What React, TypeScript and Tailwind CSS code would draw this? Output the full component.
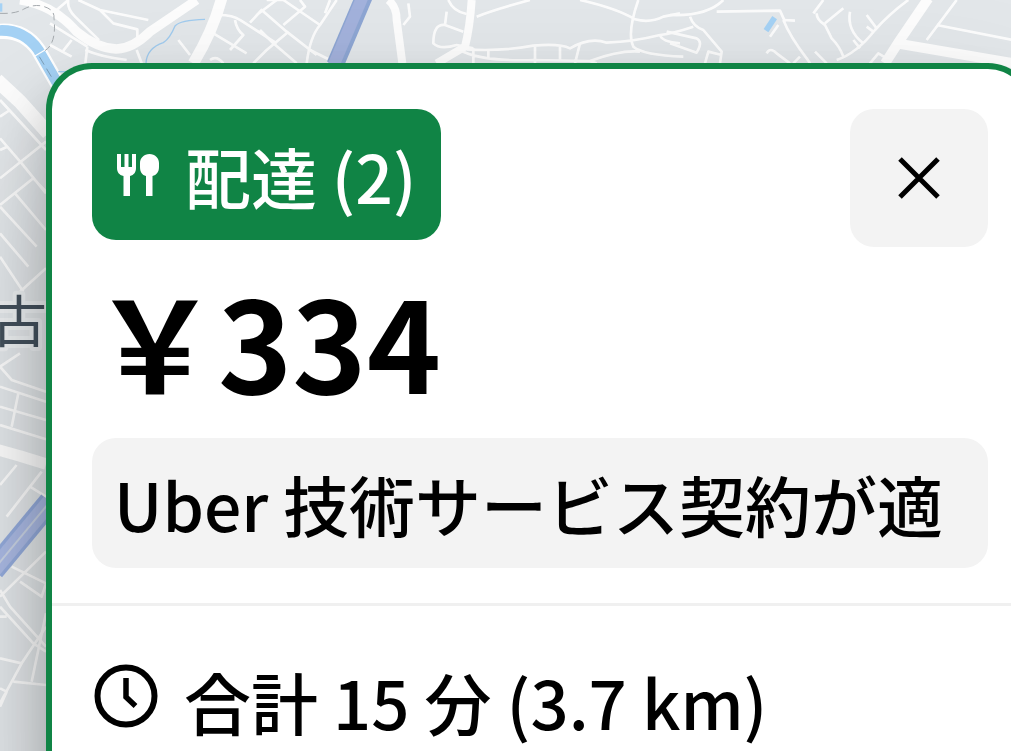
import type { ReactNode } from 'react';

const minorRoads = [
    // north west
    'M235 0 L300 30 L445 60 M300 30 L340 70 L412 88 L412 120',
    'M205 0 Q200 25 225 50 L295 118 L280 130',
    'M170 30 L205 0',
    'M150 70 L262 140 M150 135 L215 170 M215 120 L190 152 M262 140 L256 190',
    'M256 150 Q300 170 380 180 M410 150 L425 190',
    'M535 120 L570 165 M640 100 L740 160 M655 45 Q700 45 720 60 L830 130 M705 60 Q710 90 730 105 L690 150',
    'M750 68 L785 30 L860 95 L950 165 M780 90 L820 130 L890 190 M830 0 L770 45 M860 100 L800 150 L760 190',
    'M800 0 L850 0 L960 75 M960 75 L1010 0 M960 75 Q930 110 920 190 M900 0 L915 20 L850 75',
    'M930 150 L990 180 M990 0 L975 40 M630 180 Q650 165 670 190',
    // north
    'M1225 10 L1230 50 L1210 75 M1340 35 L1335 75 L1390 95 M1335 75 Q1300 70 1300 130 Q1320 150 1370 135 L1420 145',
    'M1345 0 Q1360 35 1400 42 M1430 50 Q1480 30 1590 0',
    'M1400 148 Q1500 155 1600 137 Q1680 130 1710 145 Q1770 110 1820 128 Q1900 125 1980 105 Q2020 100 2080 80',
    'M1740 0 Q1850 25 1905 58 Q1950 70 1990 50 L2040 40 M1915 0 Q1880 100 1900 140 Q1930 165 2050 170',
    'M1380 150 Q1440 185 1600 180 L1770 183 Q1860 150 1920 155 M1420 145 V190 M1605 140 V190 M1680 140 V180 M1740 130 L1725 190 M1465 150 V180',
    'M1980 105 Q1985 125 2040 130 M1770 183 L1790 190',
    // north east
    'M2010 45 Q2120 50 2170 0 M2150 35 L2340 32 L2355 65 M2070 50 Q2080 80 2110 90 L2165 155 L2160 190',
    'M2000 95 L2090 115 Q2110 125 2090 158 L2010 130 M2115 190 L2125 155 L2165 165',
    'M2350 60 Q2370 110 2420 175 L2430 190 M2350 60 L2385 62 M2310 110 L2335 75 M2440 40 L2470 0',
    'M2450 40 Q2450 60 2475 75 L2495 115 Q2520 140 2530 170 M2475 70 L2530 25 M2550 35 Q2540 90 2590 130',
    'M2725 0 Q2670 40 2625 90 Q2570 160 2510 180 M2600 45 L2630 85 M2560 120 L2580 145 M2600 80 L2620 95',
    'M2380 190 L2400 170 M2445 155 L2480 190 M2300 160 Q2310 140 2330 160 L2370 190 M2610 190 L2635 160 L2660 175',
    'M2870 0 L2780 120 M2810 75 L3040 120',
    // west
    'M0 300 L138 450 M0 415 L65 490 L138 580 M0 350 L30 330 M0 535 L138 425 M0 615 L100 535 M100 535 L138 575',
    'M45 580 L138 690 M0 620 L110 740 M0 700 L85 800 M60 875 L138 805 M0 770 L70 875 M0 450 L22 440',
    'M60 1060 L0 1100 L35 1140 L138 1175 M55 1180 L35 1280 M0 1160 L138 1205',
    'M0 1220 L138 1260 M0 1275 L138 1318 M0 1455 L50 1395',
    'M20 1550 L125 1415 M90 1460 L138 1490 M0 1790 L138 1655 M35 1700 L138 1750 M60 1745 L125 1790 L138 1750',
    'M0 1770 L30 1820 L138 1940 M0 1850 L20 1850 M0 1820 L100 1930 L138 1955 M138 1840 L95 2045',
    'M0 2110 L65 1990 L138 1880 M0 1975 L65 1990 M40 2045 L138 2055 M0 2065 L20 2075 L0 2120',
];

const majorRoads = [
    { d: 'M60 0 Q160 15 230 95 Q290 145 350 147 Q400 145 450 95 L590 0', width: 28 },
    { d: 'M665 -5 Q640 90 580 190', width: 34 },
    { d: 'M1165 0 Q1190 20 1190 60 L1207 190', width: 24 },
    { d: 'M1415 0 Q1410 80 1395 140 L1310 190', width: 24 },
    { d: 'M2785 -5 L2700 120 L2655 190', width: 30 },
    { d: 'M2690 130 L3040 190', width: 30 },
    { d: 'M-10 240 L60 305 L145 400', width: 42 },
    { d: 'M-5 1350 L60 1368 L138 1392', width: 34 },
];

function CityMap() {
    return (
        <svg
            aria-hidden="true"
            viewBox="0 0 1011 751"
            preserveAspectRatio="xMinYMin slice"
            className="absolute inset-0 h-full w-full"
        >
            {/* Traced at three units per pixel */}
            <g transform="scale(0.33333)" fill="none" strokeLinejoin="round">
                <g stroke="#ffffff" strokeWidth="8" opacity="0.9">
                    {minorRoads.map((d) => (
                        <path key={d} d={d} />
                    ))}
                </g>

                {/* River */}
                <path d="M-10 95 Q70 85 115 150 L175 255" stroke="#ffffff" strokeWidth="46" />
                <path d="M-10 92 Q70 85 115 150 L175 255" stroke="#a5d2f5" strokeWidth="32" />
                <path d="M118 170 L160 240" stroke="#7d9fb8" strokeWidth="3" strokeDasharray="28 14" />
                <path d="M0 10 V35" stroke="#a5d2f5" strokeWidth="14" />
                <path d="M438 190 Q440 145 490 128 Q510 115 525 78 Q540 60 615 58" stroke="#a0cbee" strokeWidth="4" />
                <path d="M175 215 H200" stroke="#a0cbee" strokeWidth="4" />
                <path d="M2298 92 L2324 53" stroke="#a5d2f5" strokeWidth="17" />

                <g stroke="#fdfdfd">
                    {majorRoads.map((road) => (
                        <path key={road.d} d={road.d} strokeWidth={road.width} />
                    ))}
                </g>

                <path
                    d="M0 40 Q45 42 70 28 T120 17 Q165 25 162 55 Q170 130 135 152"
                    stroke="#a5aaae"
                    strokeWidth="3"
                    strokeDasharray="22 12"
                />
                <path d="M105 168 L135 150" stroke="#ffffff" strokeWidth="4" />

                {/* Motorways */}
                <path d="M1092 -10 L1005 195" stroke="#8ea6d3" strokeWidth="52" />
                <path d="M1088 -10 L1001 195" stroke="#a3b2dc" strokeWidth="36" />
                <path d="M-20 1710 L150 1505" stroke="#94abdb" strokeWidth="68" />
                <path d="M-20 1710 L150 1505" stroke="#abbae4" strokeWidth="48" />
                <path d="M-20 1710 L150 1505" stroke="#c9d3e4" strokeWidth="6" />
            </g>

            <text
                x="19"
                y="342"
                textAnchor="middle"
                stroke="#edf0f2"
                strokeWidth="8"
                strokeLinejoin="round"
                paintOrder="stroke"
                className="fill-[#44515d] font-['Noto_Sans_CJK_JP',sans-serif] text-[56px] font-normal"
            >
                古
            </text>
        </svg>
    );
}

function CutleryIcon() {
    return (
        <svg aria-hidden="true" viewBox="0 0 42 42" className="h-[42px] w-[42px] shrink-0" fill="currentColor">
            <path d="M0 0h4v13h3.500V0h4v13H15V0h4v14c0 4-2 7-6 8v20H6.500V22C2 21 0 18 0 14z" />
            <path d="M32.500 0C38 0 42 4 42 9v4c0 5-2.500 8-6.500 9v20H29V22c-4-1-6-4-6-9V9c0-5 4-9 9.500-9z" />
        </svg>
    );
}

function ClockIcon() {
    return (
        <svg aria-hidden="true" viewBox="0 0 64 64" className="h-16 w-16 shrink-0" fill="none" stroke="currentColor">
            <circle cx="32" cy="32" r="28.500" strokeWidth="6" />
            <path d="M32 14v19l9.500 9" strokeWidth="5.500" />
        </svg>
    );
}

function Tag({ children, className }: { children: ReactNode; className: string }) {
    return <div className={`flex items-center rounded-3xl ${className}`}>{children}</div>;
}

export default function App() {
    return (
        <main className="relative flex min-h-screen flex-col overflow-hidden bg-[#e3e7ea] font-['Noto_Sans_CJK_JP','Noto_Sans',sans-serif] text-[66px] leading-[96px] font-medium text-black">
            <CityMap />

            <section className="relative mt-[63px] -mr-[23px] -mb-20 ml-[46px] flex-1 rounded-t-[46px] border-[6px] border-b-0 border-[#108445] bg-white pt-10 shadow-[0_30px_50px_rgba(0,0,0,0.2),0_80px_160px_rgba(0,0,0,0.2)]">
                <div className="px-10">
                    <header className="flex items-start justify-between">
                        <Tag className="h-[131px] gap-[26px] bg-[#108445] px-[25px] text-white">
                            <CutleryIcon />
                            <span className="whitespace-nowrap">配達 (2)</span>
                        </Tag>
                        <button
                            type="button"
                            aria-label="閉じる"
                            className="flex h-[138px] w-[138px] items-center justify-center rounded-3xl bg-[#f3f3f3]"
                        >
                            <svg aria-hidden="true" viewBox="0 0 42 42" className="h-[42px] w-[42px]" stroke="currentColor" strokeWidth="5">
                                <path d="M2 2l38 38M40 2L2 40" />
                            </svg>
                        </button>
                    </header>

                    <h1 className="pb-[6px] text-[126px] leading-[185px] font-bold whitespace-nowrap">
                        ￥334
                    </h1>

                    <Tag className="h-[130px] bg-[#f3f3f3] px-[22px]">
                        <p className="whitespace-nowrap">Uber 技術サービス契約が適</p>
                    </Tag>
                </div>

                <hr className="mt-[35px] border-t-[3px] border-[#f0f0f0]" />

                <div className="flex items-start gap-[26px] px-[42px] pt-[58px]">
                    <ClockIcon />
                    <p className="text-[67px] leading-[74px] whitespace-nowrap">合計 15 分 (3.7 km)</p>
                </div>
            </section>
        </main>
    );
}
